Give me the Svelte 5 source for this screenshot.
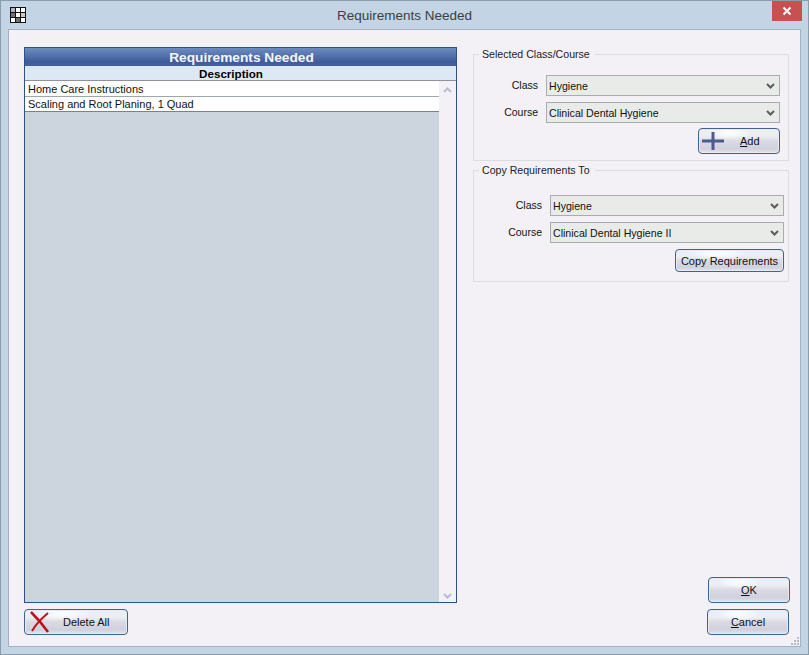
<script lang="ts">
	const rows = ["Home Care Instructions", "Scaling and Root Planing, 1 Quad"];
	const selected = [
		{ label: "Class", value: "Hygiene" },
		{ label: "Course", value: "Clinical Dental Hygiene" },
	];
	const copyTo = [
		{ label: "Class", value: "Hygiene" },
		{ label: "Course", value: "Clinical Dental Hygiene II" },
	];
</script>

{#snippet combo(label: string, value: string)}
	<div class="field">
		<span class="field-label">{label}</span>
		<div class="combo">
			<span>{value}</span>
			<svg width="9" height="6" viewBox="0 0 9 6"><path d="M1 1l3.5 3.5L8 1" fill="none" stroke="#5c5c5c" stroke-width="2" /></svg>
		</div>
	</div>
{/snippet}

<div class="window">
	<header class="titlebar">
		<svg class="app-icon" width="16" height="16" viewBox="0 0 16 16">
			<rect x="0.5" y="0.5" width="15" height="15" fill="#fff" stroke="#111" />
			<rect x="1" y="1" width="4" height="4" fill="#b4b4c0" />
			<rect x="1" y="6" width="4" height="4" fill="#707070" />
			<rect x="11" y="6" width="4" height="4" fill="#c8c8c8" />
			<rect x="6" y="11" width="4" height="4" fill="#707070" />
			<path d="M5.5 0v16M10.5 0v16M0 5.5h16M0 10.5h16" stroke="#111" />
		</svg>
		<span class="title">Requirements Needed</span>
		<button class="close" aria-label="Close">
			<svg width="10" height="10" viewBox="0 0 10 10"><path d="M1.5 1.5l7 7M8.5 1.5l-7 7" stroke="#fff" stroke-width="2" /></svg>
		</button>
	</header>

	<main class="client">
		<section class="left">
			<div class="grid">
				<div class="grid-title">Requirements Needed</div>
				<div class="grid-col">Description</div>
				<div class="grid-body">
					<div class="grid-rows">
						{#each rows as row}
							<div class="grid-row">{row}</div>
						{/each}
					</div>
					<div class="scrollbar">
						<svg width="9" height="6" viewBox="0 0 9 6"><path d="M1 5l3.5-3.5L8 5" fill="none" stroke="#b9bdd2" stroke-width="2" /></svg>
						<svg width="9" height="6" viewBox="0 0 9 6"><path d="M1 1l3.5 3.5L8 1" fill="none" stroke="#b9bdd2" stroke-width="2" /></svg>
					</div>
				</div>
			</div>
			<button class="btn delete-btn">
				<svg width="20" height="22" viewBox="0 0 20 22"><path d="M1 1c6 6 12 13 17 20" fill="none" stroke="#c0111a" stroke-width="2.5" /><path d="M18 2C12 7 6 13 2 20" fill="none" stroke="#c0111a" stroke-width="2" /></svg>
				<span>Delete All</span>
			</button>
		</section>

		<section class="right">
			<fieldset class="group first">
				<legend>Selected Class/Course</legend>
				{#each selected as f}
					{@render combo(f.label, f.value)}
				{/each}
				<button class="btn add-btn">
					<svg width="22" height="18" viewBox="0 0 22 18"><path d="M11 0v18M0 9h22" stroke="#4f5a8c" stroke-width="3" /></svg>
					<span><u>A</u>dd</span>
				</button>
			</fieldset>

			<fieldset class="group second">
				<legend>Copy Requirements To</legend>
				{#each copyTo as f}
					{@render combo(f.label, f.value)}
				{/each}
				<button class="btn copy-btn">Copy Requirements</button>
			</fieldset>

			<div class="actions">
				<button class="btn ok-btn"><span><u>O</u>K</span></button>
				<button class="btn cancel-btn"><span><u>C</u>ancel</span></button>
			</div>
		</section>

		<svg class="grip" width="10" height="10" viewBox="0 0 10 10" fill="#b4bcc4">
			<rect x="7" y="1" width="2" height="2" />
			<rect x="4" y="4" width="2" height="2" />
			<rect x="7" y="4" width="2" height="2" />
			<rect x="1" y="7" width="2" height="2" />
			<rect x="4" y="7" width="2" height="2" />
			<rect x="7" y="7" width="2" height="2" />
		</svg>
	</main>
</div>

<style>
	:global(body) {
		margin: 0;
		background: #c3d5e4;
	}

	.window {
		width: 809px;
		height: 655px;
		box-sizing: border-box;
		display: flex;
		flex-direction: column;
		background: #c3d5e4;
		border: 1px solid #8b9cab;
		font-family: "Liberation Sans", Arial, sans-serif;
		font-size: 11px;
		color: #111;
	}

	.titlebar {
		height: 28px;
		flex: none;
		position: relative;
		display: flex;
		align-items: center;
		justify-content: center;
	}

	.app-icon {
		position: absolute;
		left: 9px;
		top: 6px;
	}

	.title {
		font-size: 13.5px;
		color: #3a3f45;
	}

	.close {
		position: absolute;
		right: 6px;
		top: 0;
		width: 30px;
		height: 20px;
		padding: 0;
		border: none;
		background: #c75050;
		display: flex;
		align-items: center;
		justify-content: center;
	}

	.client {
		flex: 1;
		margin: 0 7px 7px;
		position: relative;
		box-sizing: border-box;
		border: 1px solid #a4b2bf;
		background: #f3f1f5;
		padding: 17px 11px 11px 15px;
		display: flex;
		gap: 16px;
	}

	.left {
		width: 433px;
		flex: none;
		display: flex;
		flex-direction: column;
		gap: 6px;
	}

	.grid {
		height: 556px;
		box-sizing: border-box;
		border: 1px solid #2c5288;
		background: #f3f1f5;
		display: flex;
		flex-direction: column;
	}

	.grid-title {
		height: 18px;
		flex: none;
		background: linear-gradient(#6d8cc2, #3f5d9a 75%, #44619c);
		color: #f4f6fb;
		font-size: 13.7px;
		font-weight: bold;
		line-height: 19px;
		text-align: center;
		padding-left: 2px;
	}

	.grid-col {
		height: 14px;
		flex: none;
		background: #dce9f4;
		color: #000;
		font-size: 11.6px;
		font-weight: bold;
		line-height: 16px;
		text-align: center;
		padding-right: 19px;
		border-bottom: 1px solid #8f9397;
	}

	.grid-body {
		flex: 1;
		display: flex;
		min-height: 0;
	}

	.grid-rows {
		flex: 1;
		background: #ccd5dd;
	}

	.grid-row {
		height: 15px;
		line-height: 16px;
		padding-left: 3px;
		background: #fff;
		border-bottom: 1px solid #9ea5ab;
	}

	.grid-row:last-child {
		height: 14px;
		line-height: 14px;
		border-bottom-color: #7c8185;
	}

	.scrollbar {
		width: 17px;
		flex: none;
		box-sizing: border-box;
		padding: 6px 0 3px;
		display: flex;
		flex-direction: column;
		justify-content: space-between;
		align-items: center;
	}

	.btn {
		box-sizing: border-box;
		padding: 0;
		border: 1px solid #3d6390;
		border-radius: 4px;
		background:
			radial-gradient(ellipse 28% 30% at 38% 15%, #fff, transparent),
			linear-gradient(#eceef2, #eceef2 30%, #d9dae4 50%, #d0d1de 82%, #e2e3ea);
		box-shadow: inset 0 0 0 1px #e9ebf1;
		font: inherit;
		color: #111;
		display: flex;
		align-items: center;
	}

	.delete-btn {
		width: 104px;
		height: 26px;
		padding-left: 5px;
		gap: 13px;
	}

	.right {
		width: 316px;
		flex: none;
		display: flex;
		flex-direction: column;
	}

	.group {
		margin: 0;
		box-sizing: border-box;
		border: 1px solid #dcdde0;
		display: flex;
		flex-direction: column;
		align-items: flex-end;
		gap: 6px;
	}

	.group legend {
		margin-left: 5px;
		padding: 0 5px 0 3px;
		font-size: 10.6px;
		line-height: 14px;
		color: #222;
	}

	.first {
		height: 114px;
		margin-top: 0;
		padding: 14px 8px 0 0;
	}

	.second {
		height: 119px;
		margin-top: 2px;
		padding: 18px 4px 0 0;
	}

	.field {
		display: flex;
		align-items: center;
		gap: 8px;
	}

	.field-label {
		font-size: 10.5px;
		line-height: 14px;
		margin-top: -1px;
	}

	.combo {
		width: 234px;
		height: 21px;
		box-sizing: border-box;
		border: 1px solid #a9adaf;
		background: #e9ebe8;
		padding: 0 4px 0 2px;
		font-size: 10.6px;
		display: flex;
		align-items: center;
		justify-content: space-between;
		color: #111;
	}

	.add-btn {
		width: 82px;
		height: 26px;
		margin-top: -1px;
		padding-left: 3px;
		gap: 16px;
	}

	.copy-btn {
		width: 109px;
		height: 23px;
		justify-content: center;
	}

	.actions {
		margin-top: auto;
		display: flex;
		flex-direction: column;
		align-items: flex-end;
		gap: 6px;
	}

	.ok-btn,
	.cancel-btn {
		width: 82px;
		height: 26px;
		justify-content: center;
	}

	.ok-btn {
		margin-right: -1px;
	}

	.grip {
		position: absolute;
		right: 0;
		bottom: 0;
	}
</style>
